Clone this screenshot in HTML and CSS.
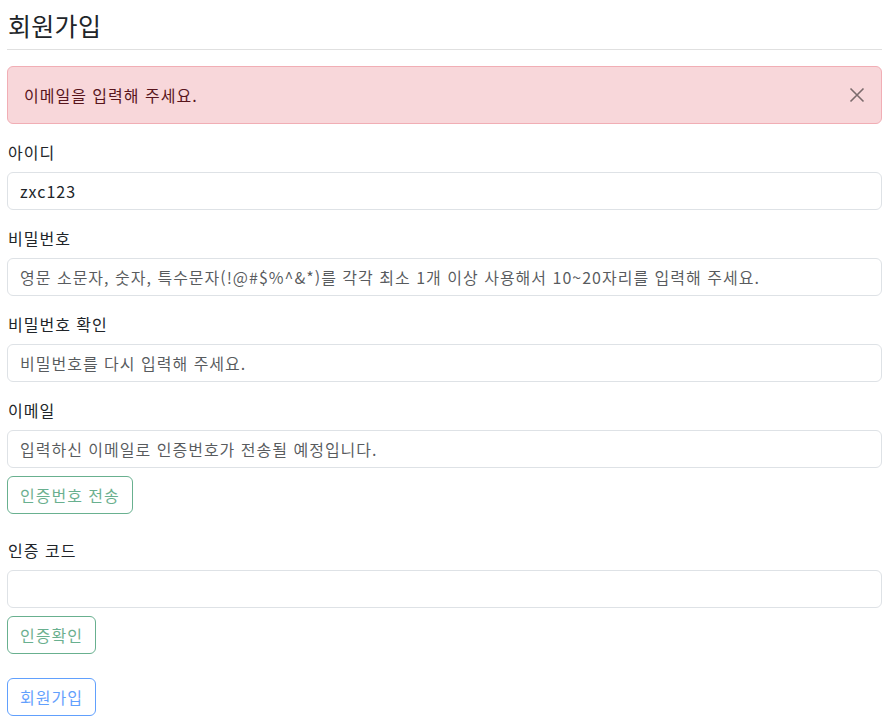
FILE: index.html
```html
<!DOCTYPE html>
<html lang="ko">
<head>
<meta charset="utf-8">
<title>회원가입</title>
<link rel="stylesheet" href="styles.css">
</head>
<body>
<div class="page">
  <h2 class="title">회원가입</h2>
  <hr class="divider">
  <div class="alert">
    <span>이메일을 입력해 주세요.</span>
    <button class="close" type="button" aria-label="Close">
      <svg width="16" height="16" viewBox="0 0 16 16"><path d="M1.5 1.5 L14.5 14.5 M14.5 1.5 L1.5 14.5" stroke="#000" stroke-width="1.6" fill="none"/></svg>
    </button>
  </div>
  <form class="form">
    <div class="group">
      <label class="label">아이디</label>
      <input class="control" type="text" value="zxc123">
    </div>
    <div class="group">
      <label class="label">비밀번호</label>
      <input class="control" type="password" placeholder="영문 소문자, 숫자, 특수문자(!@#$%^&amp;*)를 각각 최소 1개 이상 사용해서 10~20자리를 입력해 주세요.">
    </div>
    <div class="group">
      <label class="label">비밀번호 확인</label>
      <input class="control" type="password" placeholder="비밀번호를 다시 입력해 주세요.">
    </div>
    <div class="group group-wide">
      <label class="label">이메일</label>
      <input class="control" type="text" placeholder="입력하신 이메일로 인증번호가 전송될 예정입니다.">
      <button class="btn btn-success" type="button" disabled>인증번호 전송</button>
    </div>
    <div class="group group-wide">
      <label class="label">인증 코드</label>
      <input class="control" type="text">
      <button class="btn btn-success" type="button" disabled>인증확인</button>
    </div>
    <button class="btn btn-primary" type="submit" disabled>회원가입</button>
  </form>
</div>
</body>
</html>
```
FILE: styles.css
```css
* { box-sizing: border-box; }
html, body { margin: 0; padding: 0; background: #fff; }
body {
  font-family: "Noto Sans CJK KR", "Noto Sans", sans-serif;
  font-size: 16px;
  line-height: 24px;
  letter-spacing: 1px;
  color: #212529;
}
.page {
  padding: 10px 5px 0 7px;
}
.title {
  margin: 0 0 0 1px;
  font-size: 25px;
  line-height: 31px;
  font-weight: 400;
  letter-spacing: 0.3px;
}
.divider {
  margin: 8px 0 16px;
  border: 0;
  border-top: 1px solid #e0e0e0;
}
.alert {
  position: relative;
  padding: 16px 48px 16px 16px;
  border: 1px solid #f1aeb5;
  border-radius: 6px;
  background: #f8d7da;
  color: #58151c;
  margin-bottom: 16px;
}
.close {
  position: absolute;
  top: 0;
  right: 0;
  padding: 20px 16px;
  border: 0;
  background: transparent;
  opacity: .5;
  display: flex;
  cursor: pointer;
}
.form { display: flex; flex-direction: column; align-items: flex-start; }
.group {
  width: 100%;
  margin-bottom: 16px;
  display: flex;
  flex-direction: column;
  align-items: flex-start;
}
.group-wide { margin-bottom: 24px; }
.label {
  display: block;
  margin: 0 0 8px 1px;
}
.control {
  width: 100%;
  height: 38px;
  padding: 6px 12px;
  font: inherit;
  letter-spacing: inherit;
  color: #212529;
  background: #fff;
  border: 1px solid #dee2e6;
  border-radius: 6px;
  outline: none;
}
.control::placeholder { color: rgba(33,37,41,.75); }
.btn {
  margin-top: 8px;
  height: 38px;
  padding: 6px 12px;
  font: inherit;
  letter-spacing: inherit;
  line-height: 24px;
  background: transparent;
  border: 1px solid;
  border-radius: 6px;
  opacity: .65;
}
.form > .btn { margin-top: 0; }
.btn-success { color: #198754; border-color: #198754; }
.btn-primary { color: #0d6efd; border-color: #0d6efd; }
```
